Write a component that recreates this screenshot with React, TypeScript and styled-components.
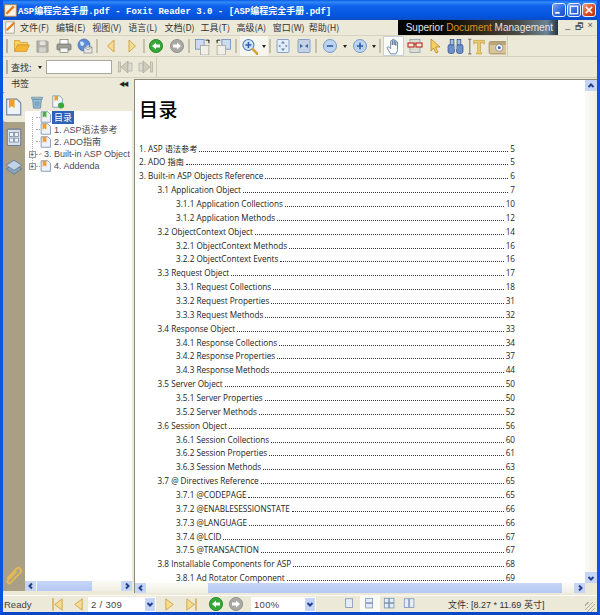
import React from 'react';
import styled, { createGlobalStyle } from 'styled-components';

const GlobalStyle = createGlobalStyle`
  html, body { margin: 0; padding: 0; background: #0a50d8; }
  * { box-sizing: border-box; }
`;

const UI_FONT = `"Liberation Sans", "Noto Sans CJK SC", sans-serif`;
const DOC_FONT = `"Open Sans", "Noto Sans CJK SC", sans-serif`;

const Window = styled.div`
  width: 600px;
  height: 615px;
  display: flex;
  flex-direction: column;
  overflow: hidden;
  background: #ece9d8;
  border-left: 3px solid #0a54e4;
  border-right: 3px solid #0a54e4;
  border-bottom: 3px solid #0a46c8;
  font-family: ${UI_FONT};
`;

const TitleBar = styled.div`
  height: 20px;
  margin: 0 -3px;
  padding: 0 4px;
  display: flex;
  align-items: center;
  gap: 1px;
  background: linear-gradient(180deg, #0a5be6 0%, #2f8af8 10%, #0f62ec 30%, #0456e0 75%, #0a4cc8 100%);
`;

const TitleText = styled.div`
  flex: 1;
  color: #fff;
  font: bold 9px "Liberation Mono", "Noto Sans CJK SC", monospace;
  white-space: nowrap;
`;

const CaptionButton = styled.div<{ $red?: boolean }>`
  width: 14px;
  height: 14px;
  border: 1px solid #e8eefc;
  border-radius: 3px;
  display: flex;
  align-items: center;
  justify-content: center;
  background: ${p => (p.$red ? 'linear-gradient(135deg,#f0a080,#d8441c 60%,#b83010)' : 'linear-gradient(135deg,#7ca4f4,#2c64e0 60%,#1c4cc8)')};
`;

const MenuBar = styled.div`
  height: 16px;
  display: flex;
  align-items: center;
  border-bottom: 1px solid #d8d4c0;
`;

const MenuItems = styled.div`
  flex: 1;
  display: flex;
  padding-left: 2px;
  align-items: center;
`;

const MenuItem = styled.div`
  width: 36.1px;
  font: 9px "Noto Sans CJK SC", sans-serif;
  color: #333;
  white-space: nowrap;
`;

const Banner = styled.div`
  width: 160px;
  height: 15px;
  display: flex;
  align-items: center;
  justify-content: flex-end;
  padding-right: 5px;
  font: 10px "Liberation Sans", sans-serif;
  color: #e4e4e4;
  white-space: nowrap;
  background: linear-gradient(90deg, #000 0%, #0a0a08 30%, #2c2418 50%, #4c4c44 75%, #6c8494 93%, #22343f 100%);
  em { font-style: normal; color: #d89420; }
`;

const MdiButtons = styled.div`
  width: 39px;
  display: flex;
  justify-content: space-around;
  padding: 0 2px 0 5px;
  font-size: 9px;
  color: #555;
`;

const ToolRow = styled.div`
  height: 21px;
  display: flex;
  align-items: center;
  border-bottom: 1px solid #d4d0bc;
`;

const ToolGroup = styled.div<{ $width?: number }>`
  height: 100%;
  width: ${p => (p.$width ? `${p.$width}px` : 'auto')};
  display: flex;
  align-items: center;
  border-right: 1px solid #cfcbb6;
  padding-left: 3px;
`;

const Grip = styled.div`
  width: 2px;
  height: 14px;
  margin-right: 3px;
  background: #b5b29e;
`;

const ToolSep = styled.div<{ $space: number }>`
  width: 2px;
  height: 14px;
  margin: 0 ${p => p.$space - 3}px 0 1px;
  background: #c4c1ac;
`;

const ToolButton = styled.div<{ $active?: boolean; $w?: number }>`
  width: ${p => p.$w ?? 21}px;
  height: 20px;
  display: flex;
  align-items: center;
  justify-content: center;
  flex-shrink: 0;
  background: ${p => (p.$active ? '#fbfbf8' : 'transparent')};
  border: 1px solid ${p => (p.$active ? '#c8cfd8' : 'transparent')};
`;

const SplitButton = styled.div`
  display: flex;
  background: #f6f5ee;
`;

const Caret = styled.span`
  width: 0;
  height: 0;
  border-left: 2px solid transparent;
  border-right: 2px solid transparent;
  border-top: 3px solid #222;
`;

const FindLabel = styled.span`
  font: 9px "Noto Sans CJK SC", sans-serif;
  color: #333;
  margin-right: 6px;
  white-space: nowrap;
`;

const FindInput = styled.div`
  width: 67px;
  height: 14px;
  margin: 0 2px 0 4px;
  background: #fff;
  border: 1px solid #a8a89c;
`;

const Content = styled.div`
  flex: 1;
  min-height: 0;
  display: flex;
  padding-bottom: 2px;
`;

const SidePane = styled.div`
  width: 129px;
  display: flex;
  flex-direction: column;
  padding-bottom: 2px;
`;

const SideHead = styled.div`
  height: 14px;
  padding: 0 3px 3px 8px;
  display: flex;
  align-items: center;
  justify-content: space-between;
  font: 9px "Noto Sans CJK SC", sans-serif;
  color: #333;
`;

const CollapseMark = styled.span`
  font-size: 6px;
  letter-spacing: -2px;
  color: #222;
  padding-right: 2px;
`;

const SideBody = styled.div`
  flex: 1;
  min-height: 0;
  display: flex;
`;

const TabRail = styled.div`
  width: 22px;
  background: #a89f85;
  display: flex;
  flex-direction: column;
  align-items: center;
  padding-bottom: 1px;
`;

const RailTab = styled.div<{ $active?: boolean }>`
  width: 100%;
  height: 30px;
  display: flex;
  align-items: center;
  justify-content: center;
  background: ${p => (p.$active ? '#ece9d8' : 'transparent')};
  border-radius: 3px 0 0 3px;
`;

const RailSpacer = styled.div`
  flex: 1;
`;

const TreeColumn = styled.div`
  flex: 1;
  min-width: 0;
  display: flex;
  flex-direction: column;
`;

const TreeTools = styled.div`
  height: 19px;
  display: flex;
  align-items: center;
  padding-left: 1px;
  background: #ece9d8;
`;

const Tree = styled.div`
  flex: 1;
  min-height: 0;
  background: #fff;
  overflow: hidden;
`;

const TreeRow = styled.div`
  height: 12.3px;
  display: flex;
  align-items: center;
  white-space: nowrap;
  font-size: 9px;
  color: #4a4a58;
`;

const GuideCell = styled.div<{ $first?: boolean; $last?: boolean }>`
  width: 8px;
  height: 100%;
  margin-left: 3px;
  flex-shrink: 0;
  display: flex;
  align-items: center;
  justify-content: center;
  background-image: repeating-linear-gradient(180deg, #aaa 0 1px, transparent 1px 2px);
  background-repeat: no-repeat;
  background-size: 1px ${p => (p.$first || p.$last ? '50%' : '100%')};
  background-position: center ${p => (p.$first ? 'bottom' : 'top')};
`;

const Expander = styled.div`
  width: 7px;
  height: 7px;
  background: #f4f4ee;
  border: 1px solid #98a098;
  font-size: 7px;
  line-height: 5px;
  text-align: center;
  color: #222;
`;

const TreeLine = styled.div`
  width: 4px;
  border-top: 1px dotted #aaa;
  flex-shrink: 0;
`;

const TreeLabel = styled.span<{ $selected?: boolean }>`
  padding: 0 2px;
  background: ${p => (p.$selected ? '#2c62b8' : 'transparent')};
  color: ${p => (p.$selected ? '#fff' : 'inherit')};
`;

const HBar = styled.div`
  height: 10px;
  display: flex;
  background: #f3f1e8;
`;

const ArrowBtn = styled.div`
  width: 11px;
  height: 10px;
  flex-shrink: 0;
  display: flex;
  align-items: center;
  justify-content: center;
  background: #c6d5f5;
`;

const Track = styled.div`
  flex: 1;
  display: flex;
  background: linear-gradient(180deg, #fbfbf6, #f0efe4);
`;

const Thumb = styled.div<{ $left: number; $width: number }>`
  margin-left: ${p => p.$left}px;
  width: ${p => p.$width}px;
  background: linear-gradient(180deg, #c6d5f7, #b5c8f2);
`;

const Splitter = styled.div`
  width: 2px;
  background: #ece9d8;
`;

const DocPane = styled.div`
  flex: 1;
  min-width: 0;
  display: flex;
  flex-direction: column;
  border-left: 1px solid #8c8a7c;
  border-top: 1px solid #8c8a7c;
  margin-top: 1px;
`;

const DocMain = styled.div`
  flex: 1;
  min-height: 0;
  display: flex;
`;

const Page = styled.div`
  flex: 1;
  min-width: 0;
  background: #fff;
  padding: 0 70px 0 4px;
  overflow: hidden;
`;

const PageTitle = styled.h1`
  margin: 14px 0 17.5px;
  font: 500 19px/30px "Noto Sans CJK SC", sans-serif;
  color: #000;
  letter-spacing: 0.5px;
`;

const TocRow = styled.div<{ $level: number }>`
  height: 13.86px;
  display: flex;
  align-items: baseline;
  padding-left: ${p => p.$level * 18.5}px;
  font: 8.2px/13.86px ${DOC_FONT};
  color: #1c1c1c;
  white-space: nowrap;
`;

const Leader = styled.span`
  flex: 1;
  min-width: 0;
  margin: 0 2px;
  border-bottom: 1px dotted #333;
  height: 8px;
`;

const VBar = styled.div`
  width: 12px;
  display: flex;
  flex-direction: column;
  background: linear-gradient(90deg, #fbfbf6, #f0efe4);
`;

const VArrow = styled(ArrowBtn)`
  width: 12px;
  height: 11px;
`;

const VTrack = styled.div`
  flex: 1;
`;

const HCorner = styled.div`
  width: 12px;
  flex-shrink: 0;
  background: #ece9d8;
`;

const StatusBar = styled.div`
  height: 17px;
  display: flex;
  align-items: center;
  font-size: 9.5px;
  color: #444;
  border-top: 1px solid #fbfaf4;
`;

const StatusReady = styled.div`
  width: 44px;
  padding-left: 1px;
`;

const PageBox = styled.div<{ $width: number }>`
  width: ${p => p.$width}px;
  height: 15px;
  background: #fff;
  display: flex;
  align-items: center;
  justify-content: space-between;
  padding-left: 3px;
  color: #444;
  font-size: 9.5px;
  letter-spacing: 0.3px;
`;

const ComboArrow = styled.div`
  width: 10px;
  height: 13px;
  margin-right: 1px;
  display: flex;
  align-items: center;
  justify-content: center;
  background: #c6d5f5;
`;

const StatusBtn = styled.div<{ $active?: boolean; $w?: number }>`
  width: ${p => p.$w ?? 20}px;
  height: 17px;
  flex-shrink: 0;
  display: flex;
  align-items: center;
  justify-content: center;
  background: ${p => (p.$active ? '#fbfbf6' : 'transparent')};
`;

const StatusGap = styled.div<{ $w: number }>`
  width: ${p => p.$w}px;
  flex-shrink: 0;
`;

const SizeText = styled.div`
  flex: 1;
  font-size: 9px;
  white-space: nowrap;
  color: #333;
`;

const ResizeGrip = styled.div`
  width: 10px;
  height: 10px;
  margin: 5px 2px 0 0;
  background: repeating-linear-gradient(135deg, transparent 0 2px, #b0ad9a 2px 3px);
`;

const Svg = ({ size = 16, children }: { size?: number; children: React.ReactNode }) => (
  <svg width={size} height={size} viewBox="0 0 16 16">{children}</svg>
);

const Chevron = ({ dir }: { dir: 'l' | 'r' | 'u' | 'd' }) => {
  const d = { l: 'M10 3L5 8l5 5', r: 'M6 3l5 5-5 5', u: 'M3 10l5-5 5 5', d: 'M3 6l5 5 5-5' }[dir];
  return (
    <svg width={8} height={8} viewBox="0 0 16 16">
      <path d={d} fill="none" stroke="#24408c" strokeWidth="4" />
    </svg>
  );
};

const FolderIcon = () => (
  <Svg>
    <path d="M0.5 2.5h5l1 2h7v2.5H4L0.5 13.5z" fill="#f8d060" stroke="#d09428" strokeWidth=".7" />
    <path d="M3.5 7h12l-3 6.5H.5z" fill="#f6b432" stroke="#d09428" strokeWidth=".7" />
  </Svg>
);

const SaveIcon = () => (
  <Svg size={15}>
    <path d="M2 2h11l1 1v11H2z" fill="#b0b0a8" stroke="#96968c" strokeWidth=".7" />
    <rect x="5" y="2.5" width="6" height="4" fill="#e4e4dc" />
    <rect x="4.5" y="9" width="7" height="5" fill="#d4d4cc" />
  </Svg>
);

const PrintIcon = () => (
  <Svg>
    <rect x="4" y="1.5" width="8" height="5" fill="#fff" stroke="#777" strokeWidth=".7" />
    <rect x="1" y="6" width="14" height="6" rx="1" fill="#a0a098" stroke="#666" strokeWidth=".7" />
    <rect x="4" y="10" width="8" height="4.5" fill="#f4f4f0" stroke="#777" strokeWidth=".7" />
  </Svg>
);

const WebMailIcon = () => (
  <Svg>
    <circle cx="7" cy="7" r="6" fill="#5c8cd8" stroke="#3c64a8" strokeWidth=".7" />
    <path d="M3 4c2-1 3 0 4 1s-1 3-2 3-2-2-2-4zM9 8l3-1 0 3-2 1z" fill="#d0e4f8" />
    <rect x="7" y="9" width="8" height="6" fill="#e8e8e4" stroke="#888" strokeWidth=".7" />
    <path d="M7 9l4 3 4-3" fill="none" stroke="#888" strokeWidth=".7" />
  </Svg>
);

const TriIcon = ({ dir }: { dir: 'l' | 'r' }) => (
  <Svg>
    <g transform={dir === 'l' ? 'matrix(-1 0 0 1 16 0)' : undefined}>
      <path d="M5 2l6.5 6L5 14z" fill="#f6dc90" stroke="#c8a040" strokeWidth=".9" />
    </g>
  </Svg>
);

const RoundArrow = ({ green, dir }: { green?: boolean; dir: 'l' | 'r' }) => {
  const fill = green ? '#34a838' : '#a8a8a4';
  const rim = green ? '#1c8020' : '#8c8c88';
  return (
    <Svg>
      <circle cx="8" cy="8" r="6.6" fill={fill} stroke={rim} strokeWidth=".8" />
      <path
        d={dir === 'l' ? 'M4 8l4-3.4V6.6h4v2.8H8v2z' : 'M12 8L8 4.6V6.6H4v2.8h4v2z'}
        fill="#fff"
      />
    </Svg>
  );
};

const PagesIcon = ({ flip }: { flip?: boolean }) => (
  <Svg size={17}>
    <g transform={flip ? 'matrix(-1 0 0 1 16 0)' : undefined}>
      <rect x="1.5" y="1.5" width="8" height="9" fill="#c9dcf4" stroke="#5c84b8" strokeWidth=".7" />
      <rect x="6" y="7" width="8" height="9" fill="#f0efe8" stroke="#a0a098" strokeWidth=".7" />
      <path d="M11 2h3v3M14 3v-1" fill="none" stroke="#222" strokeWidth=".9" />
    </g>
  </Svg>
);

const ZoomInIcon = () => (
  <Svg size={18}>
    <circle cx="7" cy="7" r="5.2" fill="#cfe2f6" stroke="#4c7cb8" strokeWidth="1" />
    <path d="M7 4.2v5.6M4.2 7h5.6" stroke="#2c5ca8" strokeWidth="1.4" />
    <path d="M11 11l5 5" stroke="#d8a030" strokeWidth="2.4" strokeLinecap="round" />
  </Svg>
);

const FitIcon = ({ wide }: { wide?: boolean }) => (
  <Svg>
    <rect x="2" y="1.5" width="12" height="13" rx="1" fill={wide ? '#c4d2e4' : '#e4eef9'} stroke="#7c9cc4" strokeWidth=".9" />
    {wide
      ? <path d="M7 8L4 6v4zM9 8l3-2v4z" fill="#3c64a0" />
      : <path d="M8 3l-2 2.5h4zM8 13l-2-2.5h4zM3.4 8l2-1.6v3.2zM12.6 8l-2-1.6v3.2z" fill="#5c84b4" />}
  </Svg>
);

const PlusMinus = ({ plus }: { plus?: boolean }) => (
  <Svg>
    <circle cx="8" cy="8" r="6.5" fill="#bcd4f0" stroke="#6c94c4" strokeWidth=".9" />
    <path d={plus ? 'M8 4.8v6.4M4.8 8h6.4' : 'M4.8 8h6.4'} stroke="#2c5ca8" strokeWidth="1.6" />
  </Svg>
);

const HandIcon = () => (
  <Svg size={18}>
    <path
      d="M5 15L2 10c-.6-1 .6-1.8 1.4-1L5 10.5V4c0-1.2 1.5-1.2 1.5 0v3V2.8c0-1.2 1.6-1.2 1.6 0V7V3.4c0-1.2 1.5-1.2 1.5 0V7.6V5c0-1.2 1.5-1.2 1.5 0v6c0 2-1 3-1.5 4z"
      fill="#fff"
      stroke="#5c7c9c"
      strokeWidth=".8"
    />
  </Svg>
);

const GlassesIcon = () => (
  <Svg>
    <rect x="3" y="1.5" width="10" height="13" fill="#dcdcd0" stroke="#7c94b4" strokeWidth=".7" />
    <rect x="1" y="5" width="6" height="4" fill="#f4e8d8" stroke="#b82820" strokeWidth="1.1" />
    <rect x="9" y="5" width="6" height="4" fill="#f4e8d8" stroke="#b82820" strokeWidth="1.1" />
    <path d="M7 6h2" stroke="#b82820" strokeWidth="1.1" />
  </Svg>
);

const ArrowCursor = () => (
  <Svg>
    <path d="M4 1l9 8H8.5l2.5 5-2 1-2.5-5L4 13z" fill="#f4d060" stroke="#b88820" strokeWidth=".8" />
  </Svg>
);

const BinocularsIcon = () => (
  <Svg size={17}>
    <rect x="1" y="6" width="6" height="8.5" rx="2" fill="#6c90c8" stroke="#2c4c84" strokeWidth=".7" />
    <rect x="9" y="6" width="6" height="8.5" rx="2" fill="#6c90c8" stroke="#2c4c84" strokeWidth=".7" />
    <rect x="3" y="1.5" width="3.5" height="5" fill="#a4c0e4" stroke="#2c4c84" strokeWidth=".7" />
    <rect x="9.5" y="1.5" width="3.5" height="5" fill="#a4c0e4" stroke="#2c4c84" strokeWidth=".7" />
    <rect x="7" y="6.5" width="2" height="4" fill="#c4d4e8" />
  </Svg>
);

const TextToolIcon = () => (
  <Svg size={18}>
    <path d="M1 2h3M1 15h3M2.5 2v13" stroke="#666" strokeWidth=".8" fill="none" />
    <path d="M6 3h9.5v3h-1l-.5-1h-2v8l1 1v1H8.500v-1l1-1V5H7.500l-.5 1H6z" fill="#eccb70" stroke="#c09a40" strokeWidth=".6" />
  </Svg>
);

const CameraIcon = () => (
  <Svg size={18}>
    <rect x="1" y="4" width="16" height="11" rx="1.5" fill="#d8c498" stroke="#a08c60" strokeWidth=".8" />
    <rect x="1" y="4" width="16" height="3" fill="#b8a478" />
    <circle cx="10" cy="9.5" r="3.3" fill="#f4f4f4" stroke="#8c8c8c" strokeWidth=".8" />
    <circle cx="10" cy="9.5" r="1.3" fill="#3c64a8" />
  </Svg>
);

const DimNavIcon = ({ flip }: { flip?: boolean }) => (
  <Svg>
    <g transform={flip ? 'matrix(-1 0 0 1 16 0)' : undefined}>
      <rect x="1.5" y="3" width="2" height="10" fill="#d8d4c4" stroke="#a8a498" strokeWidth=".6" />
      <path d="M11 2L4 8l7 6z" fill="#d0ccbc" stroke="#a8a498" strokeWidth=".7" />
      <rect x="11" y="4" width="4" height="8" fill="#dcdcd0" stroke="#a8a498" strokeWidth=".6" />
    </g>
  </Svg>
);

const BookmarkPage = ({ green, size = 12 }: { green?: boolean; size?: number }) => (
  <Svg size={size}>
    <path d="M1.5 1h9l3.5 3.5V15H1.5z" fill="#eef3fa" stroke="#6c84a8" strokeWidth="1" />
    <path d="M3.5 1H8.5v8L6 7 3.5 9z" fill={green ? '#48b048' : '#e8a030'} />
  </Svg>
);

const TrashIcon = () => (
  <Svg size={14}>
    <path d="M3 5h10l-1 10H4z" fill="#9cc0d8" stroke="#4c7c98" strokeWidth=".8" />
    <rect x="2" y="2.5" width="12" height="2" fill="#d8e4ec" stroke="#4c7c98" strokeWidth=".8" />
    <path d="M6 7v6M8 7v6M10 7v6" stroke="#4c7c98" strokeWidth=".7" />
  </Svg>
);

const AddBookmark = () => (
  <Svg size={14}>
    <path d="M2 1h8l3 3v10H2z" fill="#f4f6fa" stroke="#6c84a8" strokeWidth=".8" />
    <path d="M4 1h4v6L6 5.5 4 7z" fill="#e8a030" />
    <circle cx="11.5" cy="12" r="3.5" fill="#3ca83c" />
  </Svg>
);

const ThumbsIcon = () => (
  <Svg size={18}>
    <rect x="2" y="1" width="12" height="14.5" rx="1" fill="#d8dfe8" stroke="#6c7c94" strokeWidth=".9" />
    <rect x="4" y="4" width="3.5" height="3.5" fill="#eef2f6" stroke="#7c8ca4" strokeWidth=".7" />
    <rect x="8.5" y="4" width="3.5" height="3.5" fill="#eef2f6" stroke="#7c8ca4" strokeWidth=".7" />
    <rect x="4" y="9" width="3.5" height="3.5" fill="#eef2f6" stroke="#7c8ca4" strokeWidth=".7" />
    <rect x="8.5" y="9" width="3.5" height="3.5" fill="#eef2f6" stroke="#7c8ca4" strokeWidth=".7" />
  </Svg>
);

const LayersIcon = () => (
  <Svg size={18}>
    <path d="M8 6l7 3.5-7 5-7-5z" fill="#8ca4bc" stroke="#5c7490" strokeWidth=".7" />
    <path d="M8 2l7 4.5-7 4.5-7-4.5z" fill="#c0d2e4" stroke="#5c7490" strokeWidth=".7" />
  </Svg>
);

const ClipIcon = () => (
  <Svg size={20}>
    <path d="M2.5 11l7.5-8c2-2 5 1 3 3l-8 8.5c-1 1-3-1-2-2l7-7.5" fill="none" stroke="#e0b858" strokeWidth="1.6" />
  </Svg>
);

const StatusNav = ({ dir, bar }: { dir: 'l' | 'r'; bar?: boolean }) => (
  <Svg size={15}>
    <g transform={dir === 'l' ? 'matrix(-1 0 0 1 16 0)' : undefined}>
      <path d="M3 2l8 6-8 6z" fill="#f6dc90" stroke="#c8a040" strokeWidth=".9" />
      {bar && <rect x="12" y="2" width="1.5" height="12" fill="#f6dc90" stroke="#c8a040" strokeWidth=".6" />}
    </g>
  </Svg>
);

const ViewIcon = ({ kind }: { kind: 'single' | 'cont' | 'grid' | 'facing' }) => (
  <Svg size={14}>
    <g fill="#e4ecf6" stroke="#7c94b4" strokeWidth=".9">
      {kind === 'single' && <rect x="3" y="2" width="8" height="10" />}
      {kind === 'cont' && <><rect x="3" y="1.5" width="8" height="5" /><rect x="3" y="7.5" width="8" height="5" /></>}
      {kind === 'grid' && <><rect x="1.5" y="1.5" width="5" height="5" /><rect x="7.5" y="1.5" width="5" height="5" /><rect x="1.5" y="7.5" width="5" height="5" /><rect x="7.5" y="7.5" width="5" height="5" /></>}
      {kind === 'facing' && <><rect x="1.5" y="2" width="5" height="10" /><rect x="7.5" y="2" width="5" height="10" /></>}
    </g>
  </Svg>
);

const menus = ['文件(F)', '编辑(E)', '视图(V)', '语言(L)', '文档(D)', '工具(T)', '高级(A)', '窗口(W)', '帮助(H)'];

const treeRows = [
  { label: '目录', green: true, selected: true },
  { label: '1. ASP语法参考' },
  { label: '2. ADO指南' },
  { label: '3. Built-in ASP Object', expand: true },
  { label: '4. Addenda', expand: true },
];

const toc: [number, string, number][] = [
  [0, '1. ASP 语法参考', 5],
  [0, '2. ADO 指南', 5],
  [0, '3. Built-in ASP Objects Reference', 6],
  [1, '3.1 Application Object', 7],
  [2, '3.1.1 Application Collections', 10],
  [2, '3.1.2 Application Methods', 12],
  [1, '3.2 ObjectContext Object', 14],
  [2, '3.2.1 ObjectContext Methods', 16],
  [2, '3.2.2 ObjectContext Events', 16],
  [1, '3.3 Request Object', 17],
  [2, '3.3.1 Request Collections', 18],
  [2, '3.3.2 Request Properties', 31],
  [2, '3.3.3 Request Methods', 32],
  [1, '3.4 Response Object', 33],
  [2, '3.4.1 Response Collections', 34],
  [2, '3.4.2 Response Properties', 37],
  [2, '3.4.3 Response Methods', 44],
  [1, '3.5 Server Object', 50],
  [2, '3.5.1 Server Properties', 50],
  [2, '3.5.2 Server Methods', 52],
  [1, '3.6 Session Object', 56],
  [2, '3.6.1 Session Collections', 60],
  [2, '3.6.2 Session Properties', 61],
  [2, '3.6.3 Session Methods', 63],
  [1, '3.7 @ Directives Reference', 65],
  [2, '3.7.1 @CODEPAGE', 65],
  [2, '3.7.2 @ENABLESESSIONSTATE', 66],
  [2, '3.7.3 @LANGUAGE', 66],
  [2, '3.7.4 @LCID', 67],
  [2, '3.7.5 @TRANSACTION', 67],
  [1, '3.8 Installable Components for ASP', 68],
  [2, '3.8.1 Ad Rotator Component', 69],
];

const App = (): React.ReactElement => (
  <>
    <GlobalStyle />
    <Window>
      <TitleBar>
        <Svg size={13}>
          <rect x="1" y="1" width="14" height="14" fill="#f8f4e8" stroke="#d89030" />
          <path d="M3 12L12 3" stroke="#e87820" strokeWidth="3" />
        </Svg>
        <TitleText>ASP编程完全手册.pdf - Foxit Reader 3.0 - [ASP编程完全手册.pdf]</TitleText>
        <CaptionButton>
          <Svg size={10}><rect x="2" y="11" width="7" height="3" fill="#fff" /></Svg>
        </CaptionButton>
        <CaptionButton>
          <Svg size={10}><rect x="2" y="2" width="12" height="12" fill="none" stroke="#fff" strokeWidth="2" /></Svg>
        </CaptionButton>
        <CaptionButton $red>
          <Svg size={10}><path d="M3 3l10 10M13 3L3 13" stroke="#fff" strokeWidth="2.5" /></Svg>
        </CaptionButton>
      </TitleBar>
      <MenuBar>
        <Svg size={15}>
          <rect x="3" y="2" width="9" height="12" fill="#f8f4e8" stroke="#8c8c84" strokeWidth=".7" />
          <path d="M4 11L12 3" stroke="#e87820" strokeWidth="2.2" />
        </Svg>
        <MenuItems>
          {menus.map(m => <MenuItem key={m}>{m}</MenuItem>)}
        </MenuItems>
        <Banner>Superior&nbsp;<em>Document</em>&nbsp;Management</Banner>
        <MdiButtons><span>_</span><span>🗗</span><span>×</span></MdiButtons>
      </MenuBar>
      <ToolRow>
        <ToolGroup $width={505}>
          <Grip />
          <ToolButton><FolderIcon /></ToolButton>
          <ToolButton><SaveIcon /></ToolButton>
          <ToolButton><PrintIcon /></ToolButton>
          <ToolButton><WebMailIcon /></ToolButton>
          <ToolSep $space={5} />
          <ToolButton><TriIcon dir="l" /></ToolButton>
          <ToolButton><TriIcon dir="r" /></ToolButton>
          <ToolSep $space={3} />
          <ToolButton><RoundArrow green dir="l" /></ToolButton>
          <ToolButton><RoundArrow dir="r" /></ToolButton>
          <ToolSep $space={5} />
          <ToolButton><PagesIcon /></ToolButton>
          <ToolButton><PagesIcon flip /></ToolButton>
          <ToolSep $space={6} />
          <SplitButton>
            <ToolButton $w={19}><ZoomInIcon /></ToolButton>
            <ToolButton $w={9}><Caret /></ToolButton>
          </SplitButton>
          <ToolSep $space={4} />
          <ToolButton><FitIcon /></ToolButton>
          <ToolButton><FitIcon wide /></ToolButton>
          <ToolSep $space={6} />
          <ToolButton $w={19}><PlusMinus /></ToolButton>
          <ToolButton $w={11}><Caret /></ToolButton>
          <ToolButton $w={19}><PlusMinus plus /></ToolButton>
          <ToolButton $w={9}><Caret /></ToolButton>
          <ToolSep $space={5} />
          <ToolButton $active><HandIcon /></ToolButton>
          <ToolButton><GlassesIcon /></ToolButton>
          <ToolButton $w={20}><ArrowCursor /></ToolButton>
          <ToolButton $w={20}><BinocularsIcon /></ToolButton>
          <ToolButton><TextToolIcon /></ToolButton>
          <ToolButton><CameraIcon /></ToolButton>
        </ToolGroup>
      </ToolRow>
      <ToolRow>
        <ToolGroup $width={154}>
          <Grip />
          <FindLabel>查找:</FindLabel>
          <Caret />
          <FindInput />
          <ToolButton><DimNavIcon /></ToolButton>
          <ToolButton><DimNavIcon flip /></ToolButton>
        </ToolGroup>
      </ToolRow>
      <Content>
        <SidePane>
          <SideHead><span>书签</span><CollapseMark>◀◀</CollapseMark></SideHead>
          <SideBody>
            <TabRail>
              <RailTab $active><BookmarkPage size={18} /></RailTab>
              <RailTab><ThumbsIcon /></RailTab>
              <RailTab><LayersIcon /></RailTab>
              <RailSpacer />
              <RailTab><ClipIcon /></RailTab>
            </TabRail>
            <TreeColumn>
              <TreeTools>
                <ToolButton><TrashIcon /></ToolButton>
                <ToolButton><AddBookmark /></ToolButton>
              </TreeTools>
              <Tree>
                {treeRows.map((r, i) => (
                  <TreeRow key={r.label}>
                    <GuideCell $first={i === 0} $last={i === treeRows.length - 1}>
                      {r.expand && <Expander>+</Expander>}
                    </GuideCell>
                    <TreeLine />
                    <BookmarkPage green={r.green} />
                    <TreeLabel $selected={r.selected}>{r.label}</TreeLabel>
                  </TreeRow>
                ))}
              </Tree>
              <HBar>
                <ArrowBtn><Chevron dir="l" /></ArrowBtn>
                <Track><Thumb $left={1} $width={55} /></Track>
                <ArrowBtn><Chevron dir="r" /></ArrowBtn>
              </HBar>
            </TreeColumn>
          </SideBody>
        </SidePane>
        <Splitter />
        <DocPane>
          <DocMain>
            <Page>
              <PageTitle>目录</PageTitle>
              {toc.map(([level, label, page]) => (
                <TocRow key={label} $level={level}>
                  <span>{label}</span>
                  <Leader />
                  <span>{page}</span>
                </TocRow>
              ))}
            </Page>
            <VBar>
              <VArrow><Chevron dir="u" /></VArrow>
              <VTrack />
              <VArrow><Chevron dir="d" /></VArrow>
            </VBar>
          </DocMain>
          <HBar>
            <ArrowBtn><Chevron dir="l" /></ArrowBtn>
            <Track><Thumb $left={62} $width={354} /></Track>
            <ArrowBtn><Chevron dir="r" /></ArrowBtn>
            <HCorner />
          </HBar>
        </DocPane>
      </Content>
      <StatusBar>
        <StatusReady>Ready</StatusReady>
        <StatusBtn><StatusNav dir="l" bar /></StatusBtn>
        <StatusBtn><StatusNav dir="l" /></StatusBtn>
        <StatusGap $w={1} />
        <PageBox $width={68}>2 / 309<ComboArrow><Chevron dir="d" /></ComboArrow></PageBox>
        <StatusGap $w={4} />
        <StatusBtn><StatusNav dir="r" /></StatusBtn>
        <StatusBtn $w={22}><StatusNav dir="r" bar /></StatusBtn>
        <StatusGap $w={4} />
        <StatusBtn><RoundArrow green dir="l" /></StatusBtn>
        <StatusBtn><RoundArrow dir="r" /></StatusBtn>
        <StatusGap $w={5} />
        <PageBox $width={65}>100%<ComboArrow><Chevron dir="d" /></ComboArrow></PageBox>
        <StatusGap $w={24} />
        <StatusBtn><ViewIcon kind="single" /></StatusBtn>
        <StatusBtn $active><ViewIcon kind="cont" /></StatusBtn>
        <StatusBtn><ViewIcon kind="grid" /></StatusBtn>
        <StatusBtn><ViewIcon kind="facing" /></StatusBtn>
        <StatusGap $w={28} />
        <SizeText>文件: [8.27 * 11.69 英寸]</SizeText>
        <ResizeGrip />
      </StatusBar>
    </Window>
  </>
);

export default App;
